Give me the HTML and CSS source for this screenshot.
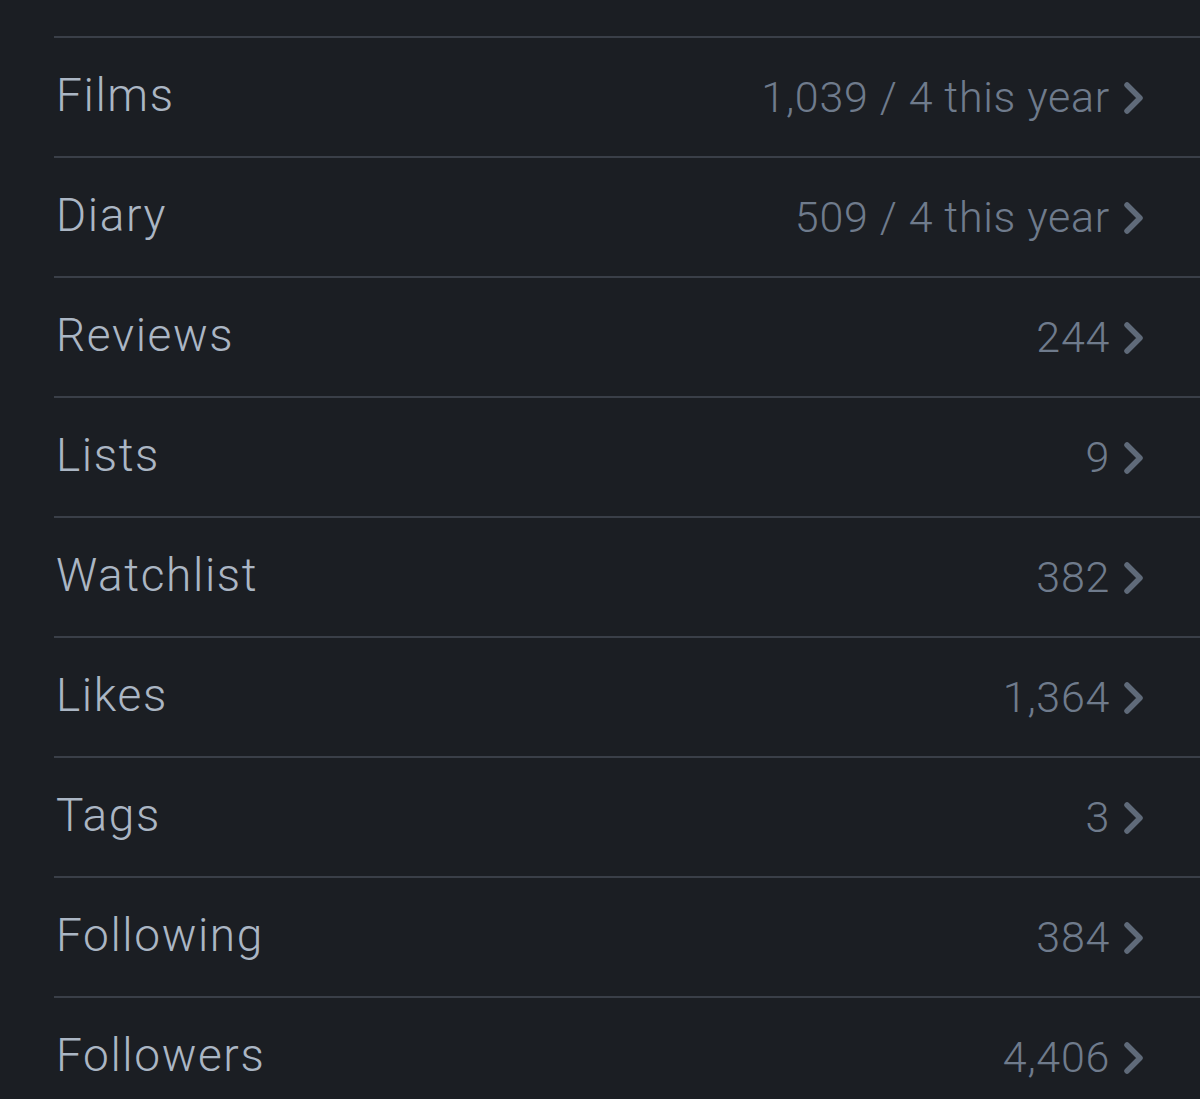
FILE: index.html
```html
<!DOCTYPE html>
<html>
<head>
<meta charset="utf-8">
<link rel="stylesheet" href="styles.css">
</head>
<body>
<ul class="stats">
  <li class="row"><span class="label">Films</span><span class="value">1,039 / 4 this year</span><svg class="chev" viewBox="0 0 24 34"><path d="M5 4 L18 17 L5 30"/></svg></li>
  <li class="row"><span class="label">Diary</span><span class="value">509 / 4 this year</span><svg class="chev" viewBox="0 0 24 34"><path d="M5 4 L18 17 L5 30"/></svg></li>
  <li class="row"><span class="label">Reviews</span><span class="value">244</span><svg class="chev" viewBox="0 0 24 34"><path d="M5 4 L18 17 L5 30"/></svg></li>
  <li class="row"><span class="label">Lists</span><span class="value">9</span><svg class="chev" viewBox="0 0 24 34"><path d="M5 4 L18 17 L5 30"/></svg></li>
  <li class="row"><span class="label">Watchlist</span><span class="value">382</span><svg class="chev" viewBox="0 0 24 34"><path d="M5 4 L18 17 L5 30"/></svg></li>
  <li class="row"><span class="label">Likes</span><span class="value">1,364</span><svg class="chev" viewBox="0 0 24 34"><path d="M5 4 L18 17 L5 30"/></svg></li>
  <li class="row"><span class="label">Tags</span><span class="value">3</span><svg class="chev" viewBox="0 0 24 34"><path d="M5 4 L18 17 L5 30"/></svg></li>
  <li class="row"><span class="label">Following</span><span class="value">384</span><svg class="chev" viewBox="0 0 24 34"><path d="M5 4 L18 17 L5 30"/></svg></li>
  <li class="row"><span class="label">Followers</span><span class="value">4,406</span><svg class="chev" viewBox="0 0 24 34"><path d="M5 4 L18 17 L5 30"/></svg></li>
</ul>
</body>
</html>
```

FILE: styles.css
```css
html, body {
  margin: 0;
  padding: 0;
  background: #1b1e23;
  height: 100%;
  overflow: hidden;
}
body {
  font-family: Roboto, "Liberation Sans", sans-serif;
}
.stats {
  list-style: none;
  margin: 0;
  padding: 36px 0 0 54px;
}
.row {
  display: flex;
  align-items: center;
  border-top: 2px solid #3a3f48;
  padding: 0 54px 4px 2px;
  height: 114px;
}
.label {
  flex: 1;
  font-size: 46px;
  font-weight: 300;
  color: #abb6c4;
  letter-spacing: 1.6px;
}
.value {
  font-size: 43px;
  font-weight: 300;
  color: #6f7b8c;
  letter-spacing: 0.7px;
  margin-top: 4px;
}
.chev {
  width: 24px;
  height: 34px;
  margin-left: 12px;
  margin-top: 6px;
  fill: none;
  stroke: #5f6a79;
  stroke-width: 5.5;
  stroke-linecap: round;
  stroke-linejoin: round;
}
```
